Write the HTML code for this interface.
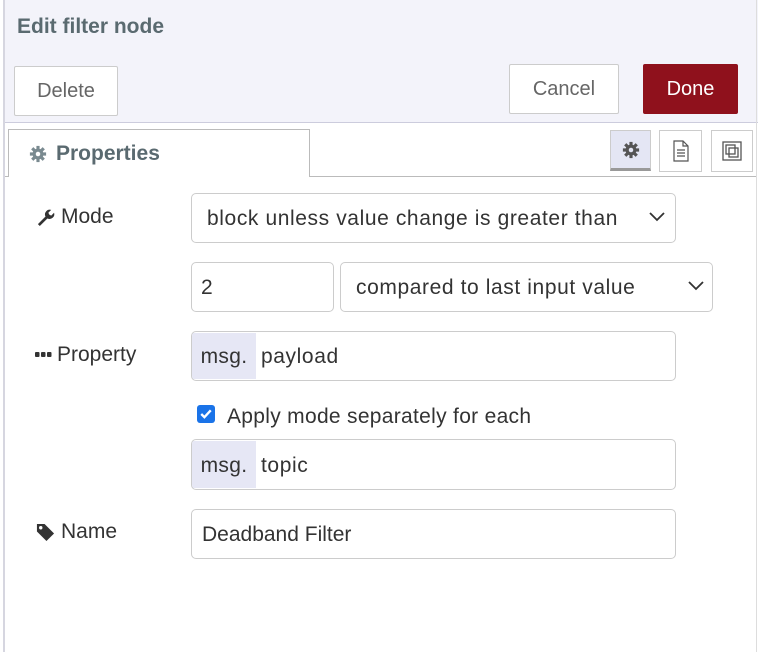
<!DOCTYPE html>
<html><head><style>
*{box-sizing:border-box;margin:0;padding:0}
body{width:762px;height:652px;background:#fff;font-family:"Liberation Sans",sans-serif;position:relative;overflow:hidden;color:#333}
.a{position:absolute}
.hdr{left:3px;top:0;width:755px;height:123px;background:#f3f3fa;border-bottom:1px solid #ccd}
.vl{left:3px;top:0;width:2px;height:652px;background:#d6d6e0}
.vr{left:756px;top:0;width:1px;height:652px;background:#ddd}
.btn{border:1px solid #ccc;background:#fff;color:#666;font-size:20px;display:flex;align-items:center;justify-content:center;border-radius:2px}
.inp{border:1px solid #ccc;border-radius:5px;background:#fff;font-size:21px;letter-spacing:0.6px;color:#333;display:flex;align-items:center;overflow:hidden;padding-top:2px}
.pre{background:#e6e7f5;height:100%;width:64px;display:flex;align-items:center;justify-content:center;margin-right:5px;margin-top:-2px;padding-top:2px;letter-spacing:0.3px}
.lbl{font-size:21px;color:#333;display:flex;align-items:center;gap:6px}
.ib{border:1px solid #ccc;background:#fff;display:flex;align-items:center;justify-content:center}
</style></head><body>
<div class="a hdr"></div>
<div class="a vl"></div><div class="a vr"></div>
<div class="a" style="left:17px;top:15px;font-size:21px;font-weight:bold;color:#5a6a70">Edit filter node</div>
<div class="a btn" style="left:14px;top:66px;width:104px;height:50px">Delete</div>
<div class="a btn" style="left:509px;top:64px;width:110px;height:50px">Cancel</div>
<div class="a btn" style="left:643px;top:64px;width:95px;height:50px;background:#8f111c;border-color:#8f111c;color:#fff">Done</div>
<div class="a" style="left:5px;top:176px;width:751px;height:1px;background:#bbb"></div>
<div class="a" style="left:8px;top:129px;width:302px;height:48px;background:#fff;border:1px solid #bbb;border-bottom:none;display:flex;align-items:center;padding-left:20px;font-size:21px;font-weight:bold;color:#5a6a70">
<svg width="18" height="18" viewBox="0 0 20 20" style="margin-right:9px"><g fill="#7a8a90"><circle cx="10" cy="10" r="6"/><g stroke="#7a8a90" stroke-width="3.5"><line x1="10" y1="1" x2="10" y2="19"/><line x1="1" y1="10" x2="19" y2="10"/><line x1="3.6" y1="3.6" x2="16.4" y2="16.4"/><line x1="16.4" y1="3.6" x2="3.6" y2="16.4"/></g></g><circle cx="10" cy="10" r="2.5" fill="#fff"/></svg>Properties</div>
<div class="a ib" style="left:610px;top:130px;width:41px;height:41px;background:#e4e6f4;border-bottom:3px solid #999">
<svg width="18" height="18" viewBox="0 0 20 20"><g fill="#555"><circle cx="10" cy="10" r="6"/><g stroke="#555" stroke-width="3.5"><line x1="10" y1="1" x2="10" y2="19"/><line x1="1" y1="10" x2="19" y2="10"/><line x1="3.6" y1="3.6" x2="16.4" y2="16.4"/><line x1="16.4" y1="3.6" x2="3.6" y2="16.4"/></g></g><circle cx="10" cy="10" r="2.5" fill="#e4e6f4"/></svg></div>
<div class="a ib" style="left:659px;top:130px;width:43px;height:42px"><svg width="18" height="22" viewBox="0 0 18 22"><path d="M2 1h9l5 5v15H2z M11 1v5h5" fill="none" stroke="#555" stroke-width="1.2"/><path d="M5 10h8M5 13h8M5 16h8" stroke="#555" stroke-width="1.2"/></svg></div>
<div class="a ib" style="left:711px;top:130px;width:42px;height:42px"><svg width="24" height="24" viewBox="0 0 24 24" fill="none" stroke="#555" stroke-width="1.3"><rect x="3" y="3" width="18" height="18"/><rect x="6" y="6" width="9" height="9"/><rect x="9" y="9" width="9" height="9"/></svg></div>

<div class="a lbl" style="left:36px;top:205px"><svg width="19" height="19" viewBox="0 0 20 20"><path d="M2 17l8-8a5 5 0 0 1 6-7l-3 3 1 2 2 1 3-3a5 5 0 0 1-7 6l-8 8z" fill="#333"/></svg>Mode</div>
<div class="a inp" style="left:191px;top:193px;width:485px;height:50px;padding-left:15px">block unless value change is greater than<svg class="a" style="right:10px;top:18px" width="16" height="10" viewBox="0 0 16 10"><path d="M1 1l7 7 7-7" fill="none" stroke="#333" stroke-width="1.8"/></svg></div>
<div class="a inp" style="left:191px;top:262px;width:143px;height:50px;padding-left:9px">2</div>
<div class="a inp" style="left:340px;top:262px;width:373px;height:50px;padding-left:15px">compared to last input value<svg class="a" style="right:8px;top:18px" width="16" height="10" viewBox="0 0 16 10"><path d="M1 1l7 7 7-7" fill="none" stroke="#333" stroke-width="1.8"/></svg></div>
<div class="a lbl" style="left:35px;top:343px;gap:5px"><svg width="17" height="6" viewBox="0 0 17 6"><rect x="0" y="0" width="4.5" height="5" rx="1" fill="#333"/><rect x="6" y="0" width="4.5" height="5" rx="1" fill="#333"/><rect x="12" y="0" width="4.5" height="5" rx="1" fill="#333"/></svg>Property</div>
<div class="a inp" style="left:191px;top:331px;width:485px;height:50px"><div class="pre">msg.</div>payload</div>
<div class="a" style="left:197px;top:405px;width:18px;height:18px;background:#1a73e8;border-radius:3px"><svg width="18" height="18" viewBox="0 0 17 17"><path d="M4 8.5l3 3 6-6.5" fill="none" stroke="#fff" stroke-width="2.2"/></svg></div>
<div class="a" style="left:227px;top:405px;font-size:21px;letter-spacing:0.3px">Apply mode separately for each</div>
<div class="a inp" style="left:191px;top:439px;width:485px;height:51px"><div class="pre">msg.</div>topic</div>
<div class="a lbl" style="left:36px;top:520px"><svg width="19" height="19" viewBox="0 0 20 20"><path d="M1 1h8l10 10-8 8L1 9z" fill="#333"/><circle cx="5" cy="5" r="1.8" fill="#fff"/></svg>Name</div>
<div class="a inp" style="left:191px;top:509px;width:485px;height:50px;padding-left:10px;letter-spacing:0">Deadband Filter</div>
</body></html>
